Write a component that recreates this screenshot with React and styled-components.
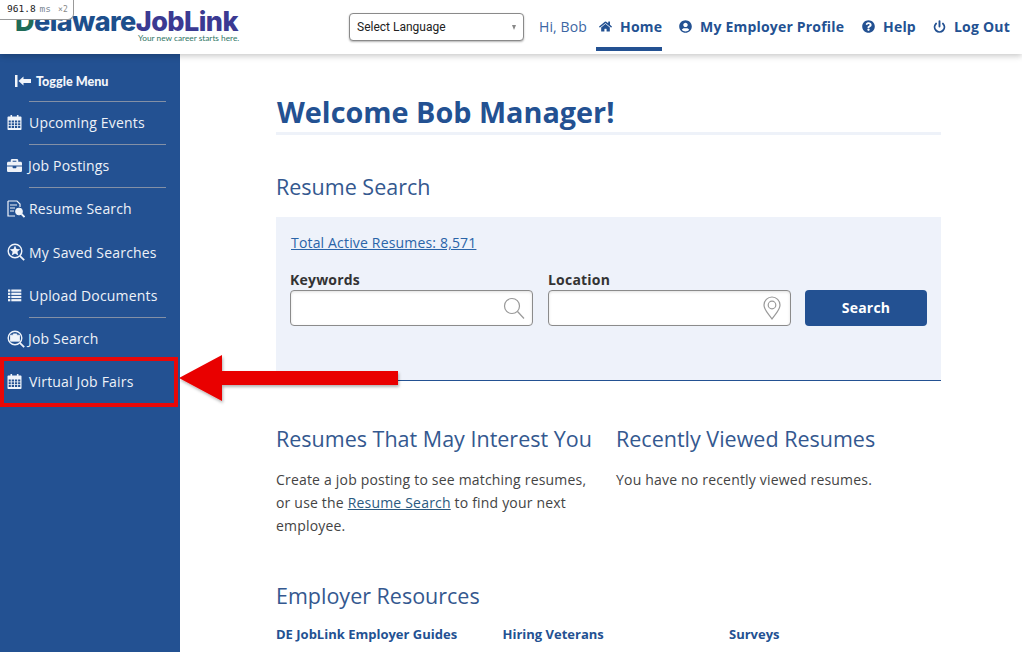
import React from "react";
import styled, { createGlobalStyle } from "styled-components";
import { FaBriefcase, FaHome, FaUserCircle, FaQuestionCircle } from "react-icons/fa";
import { FiPower } from "react-icons/fi";

const Global = createGlobalStyle`
  html, body { margin: 0; padding: 0; background: #fff; }
  body { font-family: "Open Sans", sans-serif; width: 1022px; height: 652px; overflow: hidden; }
  * { box-sizing: border-box; }
`;
const BLUE = "#235192";

const Page = styled.div`position: relative; width: 1022px; height: 652px; overflow: hidden;`;
const Header = styled.header`
  position: relative; z-index: 2; height: 54px; background: #fff; display: flex; align-items: flex-start;
  box-shadow: 0 2px 6px rgba(0,0,0,.22);
`;
const Logo = styled.div`width: 349px; padding: 9px 0 0 15px; flex: none; position: relative;`;
const LogoName = styled.div`
  font-family: Inter, sans-serif; font-weight: 800; font-size: 27px; line-height: 26px; letter-spacing: -.55px; white-space: nowrap; width: 225px;
  color: #1d4f8c;
`;
const LogoD = styled.span`color: #1f6b57;`;
const LogoJ = styled.span`color: #3b3a92;`;
const Tagline = styled.div`
  position: absolute; left: 138px; top: 33px; font-family: Lato, sans-serif; font-size: 8.3px; line-height: 11px; color: #2f7565; white-space: nowrap;
`;
const LangSelect = styled.div`
  width: 175px; height: 28px; margin-top: 13px; border: 1px solid #8a8a8a; border-radius: 4px; flex: none;
  display: flex; align-items: center; justify-content: space-between; padding: 0 7px 0 7px;
  font-family: Roboto, sans-serif; font-size: 12px; color: #222; box-shadow: 0 1px 2px rgba(0,0,0,.3); background: #fff;
`;
const Caret = styled.span`width: 0; height: 0; border-left: 2.5px solid transparent; border-right: 2.5px solid transparent; border-top: 5px solid #888;`;
const Nav = styled.nav`display: flex; margin-left: 15px; height: 51px; color: ${BLUE};`;
const Hi = styled.span`font-size: 14px; letter-spacing: .1px; line-height: 53px; margin-right: 9px; width: 48px; white-space: nowrap; color: #3c66a3;`;
const NavItem = styled.a`
  display: flex; align-items: center; gap: 8px; font-weight: 700; font-size: 14px; letter-spacing: .2px; white-space: nowrap;
  height: 51px; padding: 6px 0 0 3px; margin-right: ${p => p.$gap}px; border-bottom: 4px solid ${p => p.$active ? BLUE : "transparent"};
  width: ${p => p.$w}px;
  svg { flex: none; width: 13px; height: 13px; }
`;
const Body = styled.div`display: flex; height: 598px;`;
const Side = styled.aside`width: 180px; flex: none; background: ${BLUE}; color: #f0f4fa; padding-top: 6px;`;
const Toggle = styled.div`
  height: 41px; display: flex; align-items: center; gap: 5px; padding: 1px 0 0 15px;
  font-family: Lato, sans-serif; font-weight: 900; font-size: 12.6px; color: #f2f5fa;
`;
const Rule = styled.div`height: 1px; margin: 0 14px 0 29px; background: ${p => p.$on ? "#8390a6" : "transparent"};`;
const Item = styled.a`
  height: 42.2px; display: flex; align-items: center; padding: 0 0 1px 7px; font-size: 14px; letter-spacing: .18px; color: #eef2f8; white-space: nowrap;
  span { margin-left: ${p => p.$ml ?? 7}px; }
  svg { flex: none; width: 15px; height: 15px; }
`;
const Main = styled.main`flex: 1; padding: 38px 0 0 96px; width: 842px;`;
const Content = styled.div`width: 665px;`;
const Title = styled.h1`
  margin: 0; padding-left: 1px; font-size: 28.8px; line-height: 40px; font-weight: 700; color: ${BLUE}; border-bottom: 3px solid #eef2f9; height: 43px;
`;
const H2 = styled.h2`margin: 0; font-size: 21.5px; font-weight: 400; line-height: 30px; color: #34588f; white-space: nowrap;`;
const SearchHead = styled(H2)`margin-top: 37px; margin-bottom: 15px;`;
const Panel = styled.section`height: 164px; background: #eef2fa; border-bottom: 1px solid ${BLUE}; padding: 15px 14px 0;`;
const Total = styled.a`font-size: 14px; color: #2a64a8; padding-left: 1px; text-decoration: underline; line-height: 22px; display: block; letter-spacing: .17px;`;
const Fields = styled.div`display: flex; align-items: flex-end; margin-top: 16px;`;
const Field = styled.label`display: block; width: 243px; margin-right: 15px;`;
const Label = styled.div`font-size: 14px; font-weight: 700; color: #333; line-height: 20px; height: 20px; letter-spacing: .2px;`;
const Input = styled.div`
  height: 36px; background: #fff; border: 1px solid #8b8b8b; border-radius: 4px; display: flex; align-items: center; justify-content: flex-end; padding-right: 7px;
  box-shadow: inset 0 1px 3px rgba(0,0,0,.13);
`;
const Btn = styled.button`
  width: 122px; height: 36px; margin-left: -1px; padding: 0 0 2px; border: 0; border-radius: 4px; background: ${BLUE}; color: #fff; font: 700 14px "Open Sans", sans-serif; letter-spacing: .2px;
`;
const Cols = styled.div`display: flex; margin-top: 43px;`;
const Col = styled.div`width: ${p => p.$w}px; flex: none;`;
const Para = styled.p`margin: 14px 0 0; font-size: 14px; line-height: 23px; color: #444; width: 320px; letter-spacing: .19px;`;
const Link = styled.a`color: #2b5a80; text-decoration: underline;`;
const ResHead = styled(H2)`margin-top: 44px;`;
const Resources = styled.div`display: flex; margin-top: 13px;`;
const Res = styled.div`width: ${p => p.$w}px; font-size: 13px; font-weight: 700; color: ${BLUE}; line-height: 20px; white-space: nowrap;`;

const Badge = styled.div`
  position: absolute; z-index: 5; left: 0; top: 0; width: 74px; height: 20px; background: #fff; border: 1px solid #999; border-top: 0; border-left: 0;
  border-radius: 0 0 6px 0; font: 9.5px "DejaVu Sans Mono", monospace; line-height: 18px; padding-left: 7px; color: #222; white-space: nowrap;
`;
const BadgeUnit = styled.span`color: #7b8794; margin-left: 4px;`;
const BadgeX = styled.span`color: #888; font-size: 8px; margin-left: 7px;`;
const Highlight = styled.div`position: absolute; z-index: 4; left: 0; top: 357px; width: 178px; height: 50px; border: 4px solid #e80808;`;
const Arrow = styled.svg`position: absolute; z-index: 4; left: 176px; top: 350px;`;

const CalendarI = () => (
  <svg viewBox="0 0 14 15" fill="#f0f4fa">
    <path fillRule="evenodd" d="M3 0h1.6v1.5h4.8V0H11v1.5h2.2c.4 0 .8.4.8.8v11.9c0 .4-.4.8-.8.8H.8c-.4 0-.8-.4-.8-.8V2.300c0-.4.4-.8.8-.8H3zM1.200 5.400v2h2.100v-2zm3 0v2h2.300v-2zm3.200 0v2h2.300v-2zm3.200 0v2h2.200v-2zM1.200 8.200v2h2.100v-2zm3 0v2h2.300v-2zm3.200 0v2h2.300v-2zm3.200 0v2h2.200v-2zM1.200 11v2h2.100v-2zm3 0v2h2.300v-2zm3.200 0v2h2.300v-2zm3.200 0v2h2.200v-2z" />
  </svg>
);
const ListI = () => (
  <svg viewBox="0 0 14 15" fill="#f0f4fa">
    {[1.5, 4.7, 7.9, 11.1].map(y => (
      <React.Fragment key={y}>
        <rect x="0.500" y={y} width="2.300" height="2.200" />
        <rect x="3.800" y={y} width="10" height="2.200" />
      </React.Fragment>
    ))}
  </svg>
);
const ResumeI = () => (
  <svg viewBox="0 0 18 18" style={{ width: 18, height: 18 }} fill="none" stroke="#f0f4fa">
    <path d="M1 1h9l3 3v3M1 1v15h7" strokeWidth="1.2" />
    <path d="M3 5h7M3 8h5M3 11h4" strokeWidth="1.1" />
    <circle cx="12" cy="11.500" r="3.400" fill="#f0f4fa" />
    <path d="M14.500 14l3 3" strokeWidth="1.800" />
  </svg>
);
const Mag = ({ children }) => (
  <svg viewBox="0 0 18 18" style={{ width: 18, height: 18 }} fill="none" stroke="#f0f4fa">
    <circle cx="8" cy="8" r="6.800" strokeWidth="1.400" />
    <path d="M12.800 12.800l4.400 4.400" strokeWidth="1.800" />
    {children}
  </svg>
);
const StarI = () => <Mag><path d="M8 2.500L9.500 6l3.700.3-2.800 2.400.9 3.700L8 10.400l-3.300 2 .9-3.700-2.800-2.400L6.500 6z" fill="#f0f4fa" stroke="none" /></Mag>;
const CaseI = () => <Mag><path d="M6.300 5.200V3.900h3.400v1.300M3.500 5.200h9v6h-9z" fill="#f0f4fa" strokeWidth=".8" /></Mag>;

const menu = [
  { t: "Upcoming Events", i: <CalendarI />, rule: true },
  { t: "Job Postings", i: <FaBriefcase />, rule: true, ml: 6 },
  { t: "Resume Search", i: <ResumeI />, ml: 4 },
  { t: "My Saved Searches", i: <StarI />, ml: 4 },
  { t: "Upload Documents", i: <ListI />, rule: true },
  { t: "Job Search", i: <CaseI />, ml: 3 },
  { t: "Virtual Job Fairs", i: <CalendarI />, ml: 7 },
];

export default function App() {
  return (
    <Page>
      <Global />
      <Badge>961.8<BadgeUnit>ms</BadgeUnit><BadgeX>×2</BadgeX></Badge>
      <Header>
        <Logo>
          <LogoName><LogoD>D</LogoD>elaware<LogoJ>JobLink</LogoJ></LogoName>
          <Tagline>Your new career starts here.</Tagline>
        </Logo>
        <LangSelect>Select Language<Caret /></LangSelect>
        <Nav>
          <Hi>Hi, Bob</Hi>
          <NavItem $active $w={66} $gap={14}><FaHome />Home</NavItem>
          <NavItem $w={168} $gap={15}><FaUserCircle />My Employer Profile</NavItem>
          <NavItem $w={56} $gap={15}><FaQuestionCircle />Help</NavItem>
          <NavItem $w={80} $gap={0}><FiPower strokeWidth={3.5} />Log Out</NavItem>
        </Nav>
      </Header>
      <Body>
        <Side>
          <Toggle>
            <svg width="16" height="12" viewBox="0 0 16 12" fill="#f2f5fa">
              <rect x="0" y="0" width="2.500" height="12" />
              <path d="M3.500 6l5-4.500V4H16v4H8.500v2.500z" />
            </svg>
            Toggle Menu
          </Toggle>
          <Rule $on />
          {menu.map(m => (
            <React.Fragment key={m.t}>
              <Item $ml={m.ml}>{m.i}<span>{m.t}</span></Item>
              <Rule $on={m.rule} />
            </React.Fragment>
          ))}
        </Side>
        <Main>
          <Content>
            <Title>Welcome Bob Manager!</Title>
            <SearchHead>Resume Search</SearchHead>
            <Panel>
              <Total>Total Active Resumes: 8,571</Total>
              <Fields>
                <Field>
                  <Label>Keywords</Label>
                  <Input>
                    <svg width="22" height="24" viewBox="0 0 22 24" fill="none" stroke="#999" strokeWidth="1.200">
                      <circle cx="9" cy="10" r="7.500" /><path d="M14.500 15.500l6.500 7" />
                    </svg>
                  </Input>
                </Field>
                <Field>
                  <Label>Location</Label>
                  <Input>
                    <svg width="18" height="24" viewBox="0 0 18 24" fill="none" stroke="#999" strokeWidth="1.200" style={{ marginRight: 2 }}>
                      <path d="M9 23C5 17 1 14 1 9a8 8 0 0 1 16 0c0 5-4 8-8 14z" /><circle cx="9" cy="9" r="3.800" />
                    </svg>
                  </Input>
                </Field>
                <Btn>Search</Btn>
              </Fields>
            </Panel>
            <Cols>
              <Col $w={340}>
                <H2>Resumes That May Interest You</H2>
                <Para>Create a job posting to see matching resumes, or use the <Link>Resume Search</Link> to find your next employee.</Para>
              </Col>
              <Col $w={325}>
                <H2>Recently Viewed Resumes</H2>
                <Para>You have no recently viewed resumes.</Para>
              </Col>
            </Cols>
            <ResHead>Employer Resources</ResHead>
            <Resources>
              <Res $w={226.500}>DE JobLink Employer Guides</Res>
              <Res $w={226.500}>Hiring Veterans</Res>
              <Res $w={100}>Surveys</Res>
            </Resources>
          </Content>
        </Main>
      </Body>
      <Highlight />
      <Arrow width="226" height="60" viewBox="0 0 226 60">
        <defs><filter id="s" x="-5%" y="-20%" width="110%" height="140%"><feDropShadow dx="1" dy="2" stdDeviation="1.500" floodColor="#000" floodOpacity=".3" /></filter></defs>
        <path d="M3 28L46 5V21H222V35H46V51Z" fill="#e90606" filter="url(#s)" />
      </Arrow>
    </Page>
  );
}
